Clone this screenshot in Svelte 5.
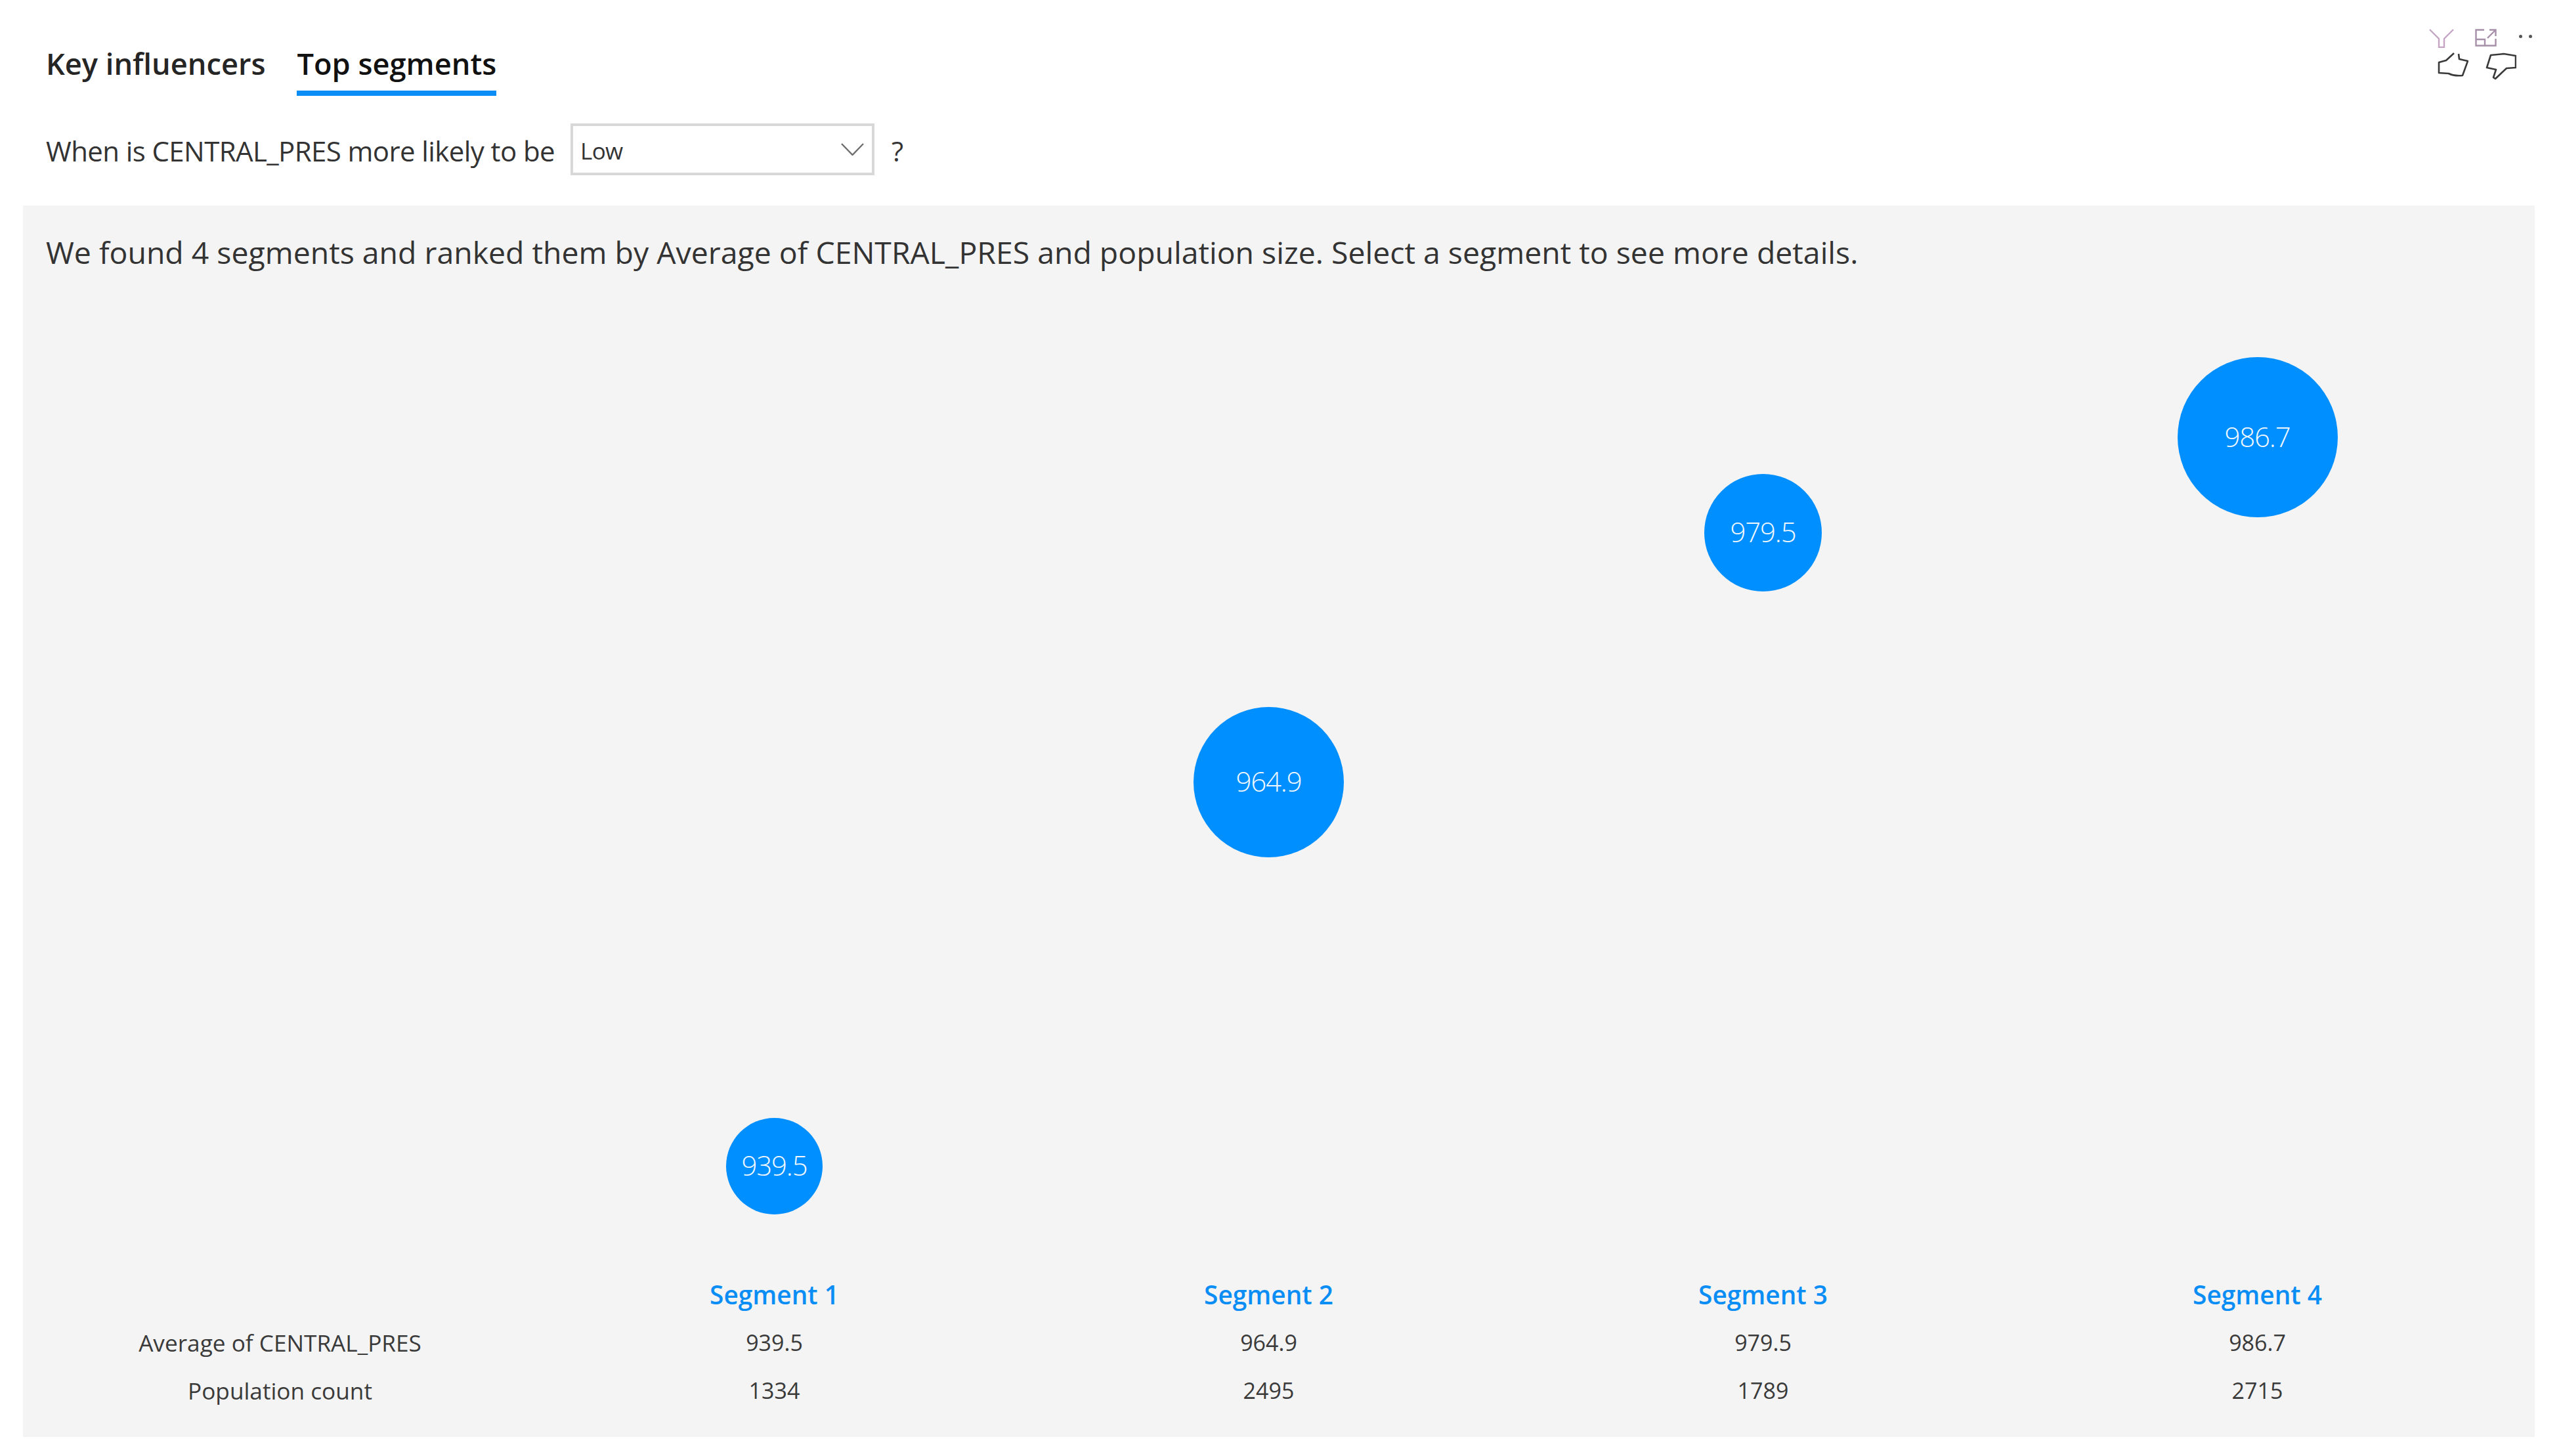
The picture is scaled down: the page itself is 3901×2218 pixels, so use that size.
<script>
	// y is the bubble centre inside the chart, d its diameter
	const segments = [
		{ name: 'Segment 1', avg: '939.5', count: '1334', d: 147, y: 1317 },
		{ name: 'Segment 2', avg: '964.9', count: '2495', d: 229, y: 732 },
		{ name: 'Segment 3', avg: '979.5', count: '1789', d: 179, y: 352 },
		{ name: 'Segment 4', avg: '986.7', count: '2715', d: 244, y: 207 }
	];
</script>

<div class="page">
	<header class="top">
		<nav class="tabs">
			<span class="tab">Key influencers</span>
			<span class="tab active">Top segments</span>
		</nav>
		<div class="actions">
			<div class="action-row">
				<svg class="ic-filter" viewBox="0 0 38 29" fill="none" stroke="#c4a6c4" stroke-width="2.4">
					<path d="M1 1 L15 15 V28 H23 V15 L37 1" />
				</svg>
				<svg class="ic-expand" viewBox="0 0 33 27" fill="none" stroke="#a68fa8" stroke-width="2.4">
					<path d="M14 1.5 H1.5 V25.5 H31.5 V15" />
					<path d="M1.5 16 H15 V25.5" />
					<path d="M19 14 L31 2 M22 1.5 H31.5 V11" />
				</svg>
				<div class="dots"><i></i><i></i></div>
			</div>
			<div class="feedback">
				<svg class="ic-thumb" viewBox="0 0 47 37" fill="none" stroke="#3a3a3a" stroke-width="2.6" stroke-linejoin="round">
					<path d="M25 1 L13 12 L2 15 L2 31 L17 32 Q24 36 38 35 L46 13 L33 10 L32 2" />
				</svg>
				<svg class="ic-thumb down" viewBox="0 0 47 42" fill="none" stroke="#3a3a3a" stroke-width="2.6" stroke-linejoin="round">
					<path d="M8 4 L28 2 L46 5 L46 23 L32 24 L15 40 L12 38 L16 26 L2 23 Z" />
				</svg>
			</div>
		</div>
	</header>

	<div class="question">
		<span class="q-text">When is CENTRAL_PRES more likely to be</span>
		<div class="select">
			<span class="sel-value">Low</span>
			<svg viewBox="0 0 35 19" fill="none" stroke="#6e6e6e" stroke-width="2.4"><path d="M1 1 L17.5 18 L34 1" /></svg>
		</div>
		<span class="mark">?</span>
	</div>

	<section class="panel">
		<p class="summary">We found 4 segments and ranked them by Average of CENTRAL_PRES and population size. Select a segment to see more details.</p>

		<div class="grid plot">
			<div></div>
			{#each segments as s}
				<div class="cell">
					<div class="bubble" style="width:{s.d}px;height:{s.d}px;margin-top:{s.y - s.d / 2}px">{s.avg}</div>
				</div>
			{/each}
		</div>

		<div class="grid rows">
			<div></div>
			{#each segments as s}
				<div class="seg-name">{s.name}</div>
			{/each}
			<div class="row-label">Average of CENTRAL_PRES</div>
			{#each segments as s}
				<div class="val">{s.avg}</div>
			{/each}
			<div class="row-label">Population count</div>
			{#each segments as s}
				<div class="val">{s.count}</div>
			{/each}
		</div>
	</section>
</div>

<style>
	:global(body) {
		margin: 0;
		background: #fff;
	}
	.page {
		width: 3901px;
		height: 2218px;
		font-family: "Open Sans", "Noto Sans", sans-serif;
		color: #333;
		overflow: hidden;
	}
	.top {
		height: 146px;
		display: flex;
		justify-content: space-between;
		padding: 0 44px 0 70px;
	}
	.tabs {
		display: flex;
		gap: 48px;
	}
	.tab {
		height: 146px;
		box-sizing: border-box;
		padding-top: 63px;
		font-size: 45.2px;
		line-height: 68px;
		font-weight: 600;
		color: #252525;
	}
	.tab.active {
		border-bottom: 8px solid #0a8ef5;
		color: #111;
	}
	.actions {
		padding-top: 44px;
		display: flex;
		flex-direction: column;
		align-items: flex-end;
	}
	.action-row {
		display: flex;
		align-items: flex-start;
		height: 36px;
	}
	.ic-filter {
		width: 38px;
		height: 29px;
	}
	.ic-expand {
		width: 33px;
		height: 27px;
		margin-left: 32px;
	}
	.dots {
		display: flex;
		gap: 10px;
		margin-left: 34px;
		margin-top: 9px;
	}
	.dots i {
		width: 5px;
		height: 5px;
		border-radius: 50%;
		background: #555;
	}
	.feedback {
		display: flex;
		gap: 26px;
		margin-right: 24px;
	}
	.ic-thumb {
		width: 47px;
		height: 37px;
	}
	.ic-thumb.down {
		height: 42px;
	}
	.question {
		display: flex;
		align-items: center;
		height: 79px;
		margin-top: 42px;
		padding-left: 70px;
		font-size: 42px;
		letter-spacing: -0.6px;
	}
	.q-text {
		padding-top: 3px;
	}
	.select {
		width: 463px;
		height: 79px;
		box-sizing: border-box;
		border: 4px solid #d8d8d8;
		margin-left: 24px;
		padding: 0 12px 0 11px;
		display: flex;
		align-items: center;
		justify-content: space-between;
		font-size: 35px;
		background: #fff;
	}
	.sel-value {
		padding-top: 3px;
	}
	.select svg {
		width: 35px;
		height: 19px;
	}
	.mark {
		margin-left: 26px;
		padding-top: 3px;
	}
	.panel {
		margin: 46px 40px 0 35px;
		height: 1876px;
		background: #f4f4f4;
		display: flex;
		flex-direction: column;
	}
	.summary {
		margin: 0;
		height: 146px;
		padding-left: 35px;
		font-size: 46.4px;
		line-height: 142px;
		color: #333;
	}
	.grid {
		display: grid;
		grid-template-columns: repeat(5, 753px);
		margin-left: 15px;
	}
	.plot {
		height: 1476px;
	}
	.cell {
		display: flex;
		flex-direction: column;
		align-items: center;
	}
	.bubble {
		flex: none;
		border-radius: 50%;
		background: #008fff;
		color: #f2f8ff;
		font-size: 42px;
		font-weight: 300;
		letter-spacing: -1.2px;
		padding-bottom: 4px;
		box-sizing: border-box;
		display: flex;
		align-items: center;
		justify-content: center;
	}
	.rows {
		grid-auto-rows: 73px;
		text-align: center;
		align-items: center;
	}
	.seg-name {
		font-size: 38.8px;
		font-weight: 600;
		color: #0a8ef5;
	}
	.row-label {
		font-size: 35.2px;
		color: #3a3a3a;
	}
	.val {
		font-size: 34px;
		color: #3a3a3a;
	}
</style>
